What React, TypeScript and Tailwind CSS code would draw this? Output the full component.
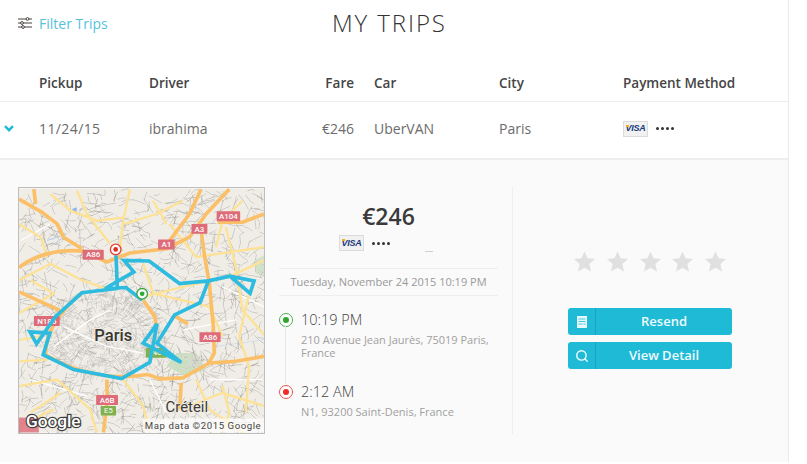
import { Search } from 'lucide-react';

const SANS = "font-['Open_Sans',sans-serif]";
const COLS = 'grid-cols-[39px_110px_155px_70px_125px_124px_1fr]';

// small seeded generator so the map streets stay the same on every load
function makeRandom(seed: number) {
  let s = seed;
  return () => {
    s = (s * 1664525 + 1013904223) % 4294967296;
    return s / 4294967296;
  };
}

function buildStreets() {
  const rand = makeRandom(42);
  const out: string[] = [];
  for (let i = 0; i < 1100; i++) {
    const x = 25 + rand() * 740;
    const y = 23 + rand() * 737;
    const angle = rand() * 3.14;
    const len = 18 + rand() * 36;
    const mx = x + Math.cos(angle) * len * 0.5 + rand() * 10 - 5;
    const my = y + Math.sin(angle) * len * 0.5 + rand() * 10 - 5;
    out.push(`M${x.toFixed(0)},${y.toFixed(0)}L${mx.toFixed(0)},${my.toFixed(0)}L${(x + Math.cos(angle) * len).toFixed(0)},${(y + Math.sin(angle) * len).toFixed(0)}`);
  }
  return out.join('');
}

function buildParisStreets() {
  const rand = makeRandom(7);
  const out: string[] = [];
  for (let i = 0; i < 550; i++) {
    const a = rand() * 6.28;
    const r = Math.sqrt(rand());
    const x = 285 + Math.cos(a) * r * 185;
    const y = 460 + Math.sin(a) * r * 125;
    const t = a + (rand() > 0.5 ? 1.57 : 0) + (rand() - 0.5) * 0.6;
    const len = 12 + rand() * 24;
    out.push(`M${x.toFixed(0)},${y.toFixed(0)}L${(x + Math.cos(t) * len).toFixed(0)},${(y + Math.sin(t) * len).toFixed(0)}`);
  }
  return out.join('');
}

const streets = buildStreets();
const parisStreets = buildParisStreets();

const orangeRoads = [
  'M25,55 L95,95 L140,130 L160,170 L215,205',
  'M25,262 C70,225 140,205 220,212 L290,245 L360,218 L470,205 L540,170 L590,100 L660,25',
  'M575,25 L540,100 L480,180',
  'M575,150 L585,225 L600,310 L612,440 L615,520 L595,555',
  'M415,585 L450,598 L520,595 L600,550 L680,545 L765,530',
  'M290,600 L292,660 L280,760',
  'M625,125 L700,125 L765,100',
  'M25,335 L135,385 L160,400',
  'M515,610 L510,690',
  'M70,25 L75,70',
  'M400,360 L435,410 L440,440',
  'M490,405 L535,432',
  'M215,338 C140,400 105,460 105,525 C190,575 290,605 415,585',
];

const yellowRoads = [
  'M25,300 L120,250 L215,300 L300,330',
  'M360,25 L340,120 L330,205',
  'M200,30 L230,100 L300,190',
  'M400,350 L520,320 L660,290 L765,240',
  'M650,140 L680,260 L700,390 L770,470',
  'M25,545 L110,540',
  'M25,620 L140,600 L240,690 L260,760',
  'M340,600 L400,680 L420,760',
  'M560,600 L600,690 L700,760',
  'M480,130 L560,230 L765,200',
  'M720,340 L690,470 L720,560 L710,700',
  'M25,130 L90,170 L110,230',
  'M400,250 L430,340 L600,380 L640,470',
  'M540,680 L640,640 L765,680',
  'M130,690 L25,740',
  'M120,40 L180,90 L260,120 L345,110',
  'M430,60 L470,130',
  'M25,480 L90,470',
  'M620,200 L640,120 L700,60',
  'M345,130 L440,100 L520,60',
  'M60,300 L130,340 L25,400',
  'M640,620 L660,700 L640,760',
  'M150,640 L60,700',
];

const whiteRoads = [
  'M520,450 L680,420',
  'M600,600 L760,600',
  'M60,600 L230,650',
  'M420,600 L470,700',
  'M640,320 L765,380',
  'M30,180 L120,130',
  'M130,500 L240,420 L300,390',
  'M160,440 L290,500 L400,520',
];

const shields = [
  { x: 622, y: 92, w: 71, label: 'A104' },
  { x: 546, y: 130, w: 48, label: 'A3' },
  { x: 445, y: 177, w: 50, label: 'A1' },
  { x: 217, y: 208, w: 64, label: 'A86' },
  { x: 70, y: 408, w: 78, label: 'N186' },
  { x: 570, y: 457, w: 64, label: 'A86' },
  { x: 258, y: 647, w: 66, label: 'A6B' },
];

function TripMap() {
  return (
    <svg viewBox="25 23 740 737" className="block h-full w-full" aria-label="Trip map">
      <rect x="25" y="23" width="740" height="737" fill="#f0ede7" />
      <path d="M500,520 L560,520 L590,570 L530,590 L470,560 Z" fill="#c9dfc0" />
      <path d="M735,240 L765,225 L765,290 L740,280 Z" fill="#cfe3c6" />
      <path d="M185,85 L200,80 L198,102 Z" fill="#8fb5f0" />
      <path d="M110,180 L170,160 M125,195 L160,170" stroke="#a9c6f3" strokeWidth="3" fill="none" />
      <path d="M620,500 L765,480" stroke="#c3d6ee" strokeWidth="2" fill="none" />
      <path d={streets} stroke="#fff" strokeWidth="3.4" fill="none" />
      <path d={streets} stroke="#a5a095" strokeWidth="1.8" fill="none" />
      <path d={parisStreets} stroke="#fff" strokeWidth="3" fill="none" />
      <path d={parisStreets} stroke="#b0aba0" strokeWidth="1.5" fill="none" />
      {whiteRoads.map((d) => (
        <path key={d} d={d} stroke="#fff" strokeWidth="4" fill="none" />
      ))}
      {yellowRoads.map((d) => (
        <path key={d} d={d} stroke="#fde295" strokeWidth="7" fill="none" strokeLinejoin="round" />
      ))}
      {orangeRoads.map((d) => (
        <path key={d} d={d} stroke="#fbbf67" strokeWidth="11" fill="none" strokeLinejoin="round" />
      ))}
      {shields.map((s) => (
        <g key={s.label + s.x}>
          <rect x={s.x} y={s.y} width={s.w} height="30" rx="2" fill="#dd6b78" />
          <text x={s.x + s.w / 2} y={s.y + 23} textAnchor="middle" fontFamily="Roboto, sans-serif" fontSize="24" fontWeight="500" fill="#fff">
            {s.label}
          </text>
        </g>
      ))}
      <rect x="408" y="505" width="62" height="29" rx="2" fill="#7fb24f" />
      <text x="440" y="527" textAnchor="middle" fontFamily="Roboto, sans-serif" fontSize="23" fill="#fff">N6</text>
      <rect x="272" y="680" width="46" height="29" rx="2" fill="#7fb24f" />
      <text x="295" y="702" textAnchor="middle" fontFamily="Roboto, sans-serif" fontSize="23" fill="#fff">E5</text>
      <text x="310" y="484" textAnchor="middle" fontFamily="Roboto, sans-serif" fontSize="50" fontWeight="500" fill="#3a362f" stroke="#f0ede7" strokeWidth="5" paintOrder="stroke">Paris</text>
      <text x="532" y="699" textAnchor="middle" fontFamily="Roboto, sans-serif" fontSize="45" fill="#3f3a33" stroke="#f0ede7" strokeWidth="4" paintOrder="stroke">Créteil</text>
      <polyline
        points="318,225 322,325 215,338 135,410 78,492 58,456 118,460 98,525 190,570 335,597 420,548 442,432 400,490 515,548 442,490 495,405 572,368 597,302 510,310 418,242 342,240 372,275 285,325 348,322 397,360"
        fill="none"
        stroke="#2ebbe0"
        strokeWidth="11"
      />
      <polyline points="597,302 662,288 735,302 723,340 662,288" fill="none" stroke="#2ebbe0" strokeWidth="11" />
      <circle cx="317" cy="207" r="16" fill="#fff" stroke="#e8432e" strokeWidth="4" />
      <circle cx="317" cy="207" r="7" fill="#e02b1f" />
      <circle cx="397" cy="341" r="16" fill="#fff" stroke="#3aa63f" strokeWidth="4" />
      <circle cx="397" cy="341" r="7" fill="#2ea836" />
      <rect x="25" y="715" width="60" height="45" fill="#dd6b78" opacity="0.8" />
      <text x="46" y="742" fontFamily="Roboto, sans-serif" fontSize="50" fontWeight="500" fill="#fff" stroke="#3c3c3c" strokeWidth="7" paintOrder="stroke" textLength="165" lengthAdjust="spacingAndGlyphs">Google</text>
      <rect x="400" y="718" width="365" height="42" fill="#fff" opacity="0.7" />
      <text x="405" y="748" fontFamily="Roboto, sans-serif" fontSize="29" fill="#444" textLength="350">Map data ©2015 Google</text>
    </svg>
  );
}

function VisaCard() {
  return (
    <span className="relative flex h-[16px] w-[25px] items-center justify-center border border-[#dcdcdc] bg-[#f1f1f1]">
      <span className="font-['Liberation_Sans',sans-serif] text-[9px] leading-none font-bold tracking-[-0.2px] text-[#1a3a7c] italic">VISA</span>
      <span className="absolute top-[3px] left-[2px] h-[2px] w-[3px] bg-[#f2b01e]" />
    </span>
  );
}

function Dots() {
  return (
    <span className="flex gap-[2px]">
      {[0, 1, 2, 3].map((i) => (
        <span key={i} className="h-[3px] w-[3px] rounded-full bg-[#333]" />
      ))}
    </span>
  );
}

function Star() {
  return (
    <svg viewBox="0 0 24 24" className="h-[23px] w-[23px]" fill="#e0e0e0">
      <path d="M12 1.5l3.2 7.2 7.8.8-5.9 5.2 1.7 7.7L12 18.4l-6.8 4 1.7-7.7L1 9.5l7.8-.8z" />
    </svg>
  );
}

function Pin({ ring, dot }: { ring: string; dot: string }) {
  return (
    <span className={`flex h-[14px] w-[14px] shrink-0 items-center justify-center rounded-full border-[1.5px] bg-white ${ring}`}>
      <span className={`h-[6px] w-[6px] rounded-full ${dot}`} />
    </span>
  );
}

function ReceiptIcon() {
  return (
    <svg viewBox="0 0 10 12" className="h-[12px] w-[10px]">
      <rect width="10" height="12" fill="#e6f8fc" />
      <path d="M1.5 3h7M1.5 5.5h7M1.5 8h4M6.5 8h2" stroke="#1fbad6" strokeWidth="0.8" />
    </svg>
  );
}

function ActionButton({ icon, label }: { icon: React.ReactNode; label: string }) {
  return (
    <button className="flex h-[27px] w-[164px] items-center rounded-[3px] bg-[#1fbad6] text-[13px] text-[#effbfd]">
      <span className="flex h-full w-[28px] items-center justify-center border-r border-[#19a5bf]">{icon}</span>
      <span className="flex-1 text-center font-semibold">{label}</span>
    </button>
  );
}

export default function App() {
  return (
    <div className={`h-[464px] w-[807px] overflow-hidden bg-white text-[#555] ${SANS}`}>
      <div className="h-[462px] w-[789px] border-r border-b border-[#ebebeb]">
        {/* Top bar */}
        <div className="flex h-[46px] items-center pl-[18px]">
          <div className="flex w-[314px] items-center gap-[7px]">
            <svg viewBox="0 0 14 12" className="h-[12px] w-[14px]" fill="none" stroke="#4a4040" strokeWidth="1">
              <path d="M0 2h14M0 6h14M0 10h14" />
              <circle cx="9.5" cy="2" r="1.4" fill="#fff" />
              <circle cx="4" cy="6" r="1.4" fill="#fff" />
              <circle cx="5" cy="10" r="1.4" fill="#fff" />
            </svg>
            <span className="text-[14px] text-[#55c2dc]">Filter Trips</span>
          </div>
          <h1 className="text-[24px] font-light tracking-[1.9px] text-[#333]">MY TRIPS</h1>
        </div>

        {/* Table header */}
        <div className={`mt-[20px] grid h-[36px] ${COLS} items-center border-b border-[#ececec] text-[13.5px] font-semibold text-[#444]`}>
          <span />
          <span>Pickup</span>
          <span>Driver</span>
          <span className="pr-[20px] text-right">Fare</span>
          <span>Car</span>
          <span>City</span>
          <span>Payment Method</span>
        </div>

        {/* Trip row */}
        <div className={`grid h-[58px] ${COLS} items-center border-b-2 border-[#eeeeee] pb-[3px] text-[14px] text-[#6b6b6b]`}>
          <span className="pl-[4px]">
            <svg viewBox="0 0 10 7" className="h-[7px] w-[10px]" fill="none" stroke="#1fbad6" strokeWidth="2.4">
              <path d="M1 1.2l4 4 4-4" />
            </svg>
          </span>
          <span className="tracking-[0.4px]">11/24/15</span>
          <span>ibrahima</span>
          <span className="pr-[20px] text-right">€246</span>
          <span>UberVAN</span>
          <span>Paris</span>
          <span className="flex items-center gap-[8px]">
            <VisaCard />
            <Dots />
          </span>
        </div>

        {/* Expanded trip detail */}
        <div className="flex h-[302px] bg-[#fafafa] pt-[27px] pl-[18px]">
          <div className="h-[247px] w-[247px] shrink-0 border border-[#bdbdbd]">
            <TripMap />
          </div>

          <div className="ml-[14px] w-[219px] shrink-0">
            <div className="relative flex h-[82px] flex-col items-center justify-end border-b border-[#eeeeee] pb-[17px]">
              <span className="text-[23px] leading-[28px] font-semibold text-[#3a3a3a]">€246</span>
              <span className="mt-[5px] mr-[48px] flex items-center gap-[8px]">
                <VisaCard />
                <Dots />
              </span>
              <span className="absolute top-[64px] left-[146px] h-px w-[8px] bg-[#cfcfcf]" />
            </div>
            <div className="flex h-[27px] items-center justify-center border-b border-[#eeeeee] text-[11px] text-[#999]">
              Tuesday, November 24 2015 10:19 PM
            </div>
            <div className="relative mt-[16px]">
              <span className="absolute top-[14px] left-[6px] h-[58px] w-px bg-[#e6e6e6]" />
              <div className="flex gap-[8px]">
                <span className="mt-[1px]"><Pin ring="border-[#4caf50]" dot="bg-[#2ea62e]" /></span>
                <div>
                  <p className="text-[14.5px] leading-[16px] font-light text-[#444]">10:19 PM</p>
                  <p className="mt-[5px] text-[11px] leading-[13px] text-[#a0a0a0]">210 Avenue Jean Jaurès, 75019 Paris, France</p>
                </div>
              </div>
              <div className="mt-[25px] flex gap-[8px]">
                <span className="mt-[1px]"><Pin ring="border-[#f0524a]" dot="bg-[#ee2c2c]" /></span>
                <div>
                  <p className="text-[14.5px] leading-[16px] font-light text-[#444]">2:12 AM</p>
                  <p className="mt-[5px] text-[11px] leading-[13px] text-[#a0a0a0]">N1, 93200 Saint-Denis, France</p>
                </div>
              </div>
            </div>
          </div>

          <div className="ml-[14px] h-[247px] flex-1 border-l border-[#eeeeee] pl-[55px]">
            <div className="ml-[5px] flex w-[154px] justify-between pt-[63px]">
              {[0, 1, 2, 3, 4].map((i) => (
                <Star key={i} />
              ))}
            </div>
            <div className="mt-[35px] flex flex-col gap-[7px]">
              <ActionButton icon={<ReceiptIcon />} label="Resend" />
              <ActionButton icon={<Search size={14} strokeWidth={2.4} />} label="View Detail" />
            </div>
          </div>
        </div>
      </div>
    </div>
  );
}
